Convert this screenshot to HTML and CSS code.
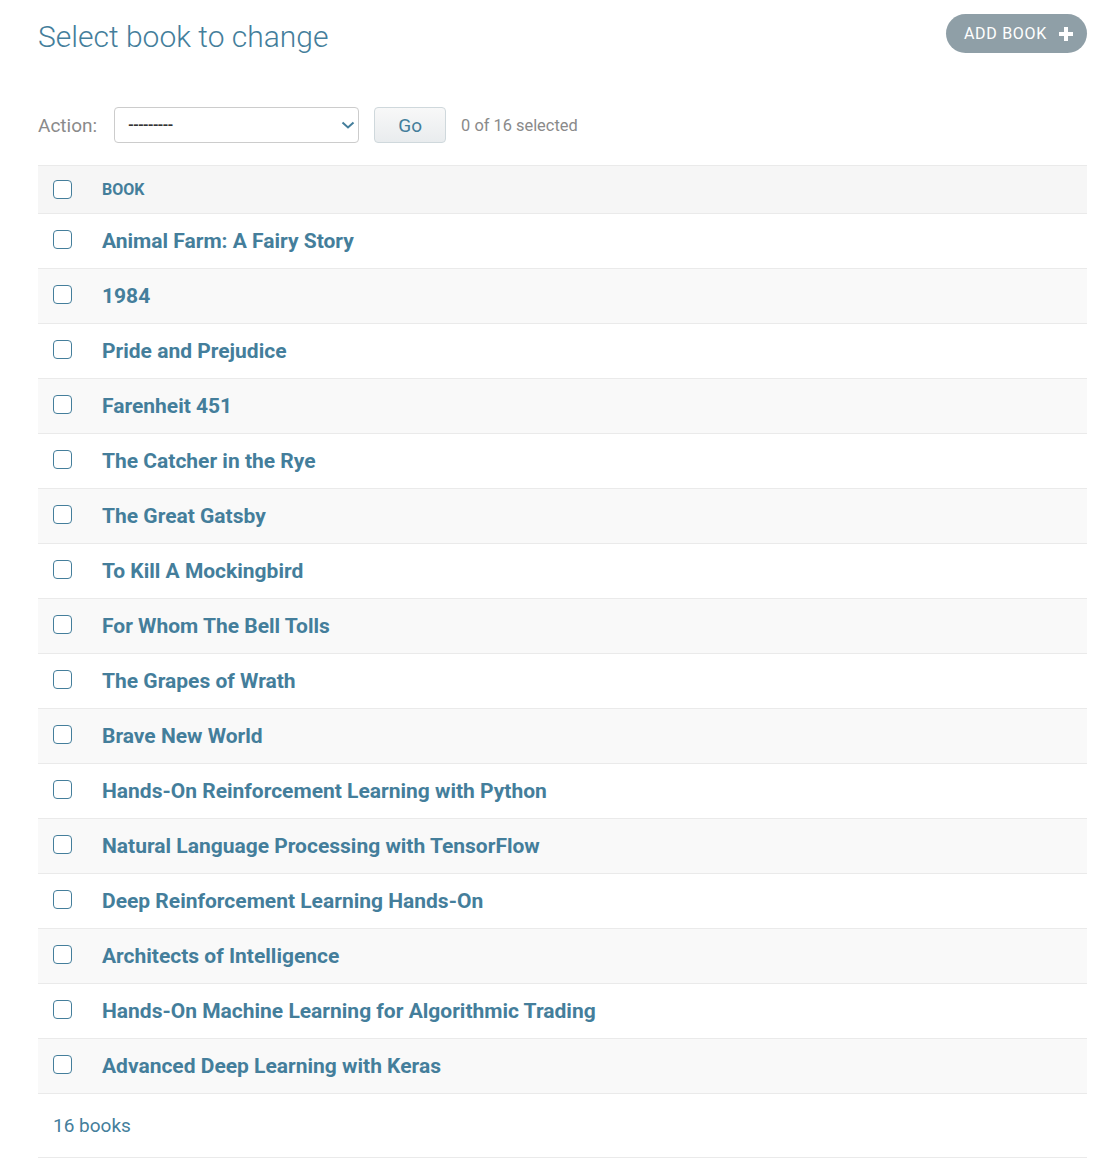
FILE: index.html
```html
<!DOCTYPE html>
<html lang="en">
<head>
<meta charset="utf-8">
<title>Select book to change</title>
<link rel="stylesheet" href="styles.css">
</head>
<body>
<div class="content">
  <div class="head">
    <h1 class="title">Select book to change</h1>
    <a class="addlink" href="#">ADD BOOK
      <svg class="plus" viewBox="0 0 16 16" width="16" height="16"><path d="M6 1h4v5h5v4h-5v5H6v-5H1V6h5z" fill="#fff"/></svg>
    </a>
  </div>
  <div class="actions">
    <label class="action-label">Action:</label>
    <div class="select">
      <span class="dashes">---------</span>
      <svg class="chev" viewBox="0 0 14 10" width="14" height="10"><path d="M1.5 2.5L7 7.5l5.5-5" fill="none" stroke="#447e9b" stroke-width="2"/></svg>
    </div>
    <button class="go">Go</button>
    <span class="counter">0 of 16 selected</span>
  </div>
  <div class="table">
    <div class="row header"><span class="cb"></span><span class="col-head">BOOK</span></div>
    <div class="row"><span class="cb"></span><a class="name" href="#">Animal Farm: A Fairy Story</a></div>
    <div class="row alt"><span class="cb"></span><a class="name" href="#">1984</a></div>
    <div class="row"><span class="cb"></span><a class="name" href="#">Pride and Prejudice</a></div>
    <div class="row alt"><span class="cb"></span><a class="name" href="#">Farenheit 451</a></div>
    <div class="row"><span class="cb"></span><a class="name" href="#">The Catcher in the Rye</a></div>
    <div class="row alt"><span class="cb"></span><a class="name" href="#">The Great Gatsby</a></div>
    <div class="row"><span class="cb"></span><a class="name" href="#">To Kill A Mockingbird</a></div>
    <div class="row alt"><span class="cb"></span><a class="name" href="#">For Whom The Bell Tolls</a></div>
    <div class="row"><span class="cb"></span><a class="name" href="#">The Grapes of Wrath</a></div>
    <div class="row alt"><span class="cb"></span><a class="name" href="#">Brave New World</a></div>
    <div class="row"><span class="cb"></span><a class="name" href="#">Hands-On Reinforcement Learning with Python</a></div>
    <div class="row alt"><span class="cb"></span><a class="name" href="#">Natural Language Processing with TensorFlow</a></div>
    <div class="row"><span class="cb"></span><a class="name" href="#">Deep Reinforcement Learning Hands-On</a></div>
    <div class="row alt"><span class="cb"></span><a class="name" href="#">Architects of Intelligence</a></div>
    <div class="row"><span class="cb"></span><a class="name" href="#">Hands-On Machine Learning for Algorithmic Trading</a></div>
    <div class="row alt"><span class="cb"></span><a class="name" href="#">Advanced Deep Learning with Keras</a></div>
  </div>
  <p class="paginator">16 books</p>
</div>
</body>
</html>
```
FILE: styles.css
```css
* { box-sizing: border-box; }
html, body { margin: 0; padding: 0; background: #fff; }
body { font-family: Roboto, "Liberation Sans", sans-serif; color: #333; }
.content { padding: 14px 32px 0 38px; }
.head { display: flex; justify-content: space-between; align-items: flex-start; height: 93px; }
.title { margin: 4px 0 0 0; font-size: 30px; font-weight: 300; color: #447e9b; line-height: 38px; }
.addlink { display: flex; align-items: center; gap: 11px; height: 39px; padding: 0 13px 0 18px; background: #8f9fa7; color: #fff; border-radius: 20px; text-decoration: none; font-size: 16px; font-weight: 400; letter-spacing: 0.7px; }
.plus { display: block; }
.actions { display: flex; align-items: center; height: 36px; }
.action-label { font-size: 19px; color: #8a8a8a; margin-right: 17px; }
.select { width: 245px; height: 36px; border: 1px solid #ccc; border-radius: 4px; display: flex; align-items: center; justify-content: space-between; padding: 0 3px 0 13px; }
.dashes { font-size: 15px; font-weight: 700; color: #333; letter-spacing: -1px; }
.go { margin-left: 15px; width: 72px; height: 36px; border: 1px solid #cfd8dc; border-radius: 4px; background: linear-gradient(#f8f8f8, #e9ecee); font-family: Roboto, "Liberation Sans", sans-serif; font-size: 19px; color: #447e9b; padding: 0; }
.counter { margin-left: 15px; font-size: 16.4px; color: #8a8a8a; }
.table { margin-top: 22px; border-top: 1px solid #eaeaea; }
.row { display: flex; align-items: center; height: 55px; border-bottom: 1px solid #eaeaea; padding-left: 15px; }
.row.alt { background: #f9f9f9; }
.row.header { height: 48px; background: #f6f6f6; }
.cb { width: 19px; height: 19px; border: 1px solid #447e9b; border-radius: 4px; background: #fff; margin-right: 30px; margin-top: -4px; flex: none; }
.row.header .cb { margin-top: -1px; }
.col-head { font-size: 16px; font-weight: 700; color: #447e9b; }
.name { font-size: 21px; font-weight: 700; color: #447e9b; text-decoration: none; margin-top: -1px; }
.paginator { margin: 0; height: 64px; display: flex; align-items: center; padding-left: 15px; font-size: 19px; color: #447e9b; border-bottom: 1px solid #eaeaea; }
```
